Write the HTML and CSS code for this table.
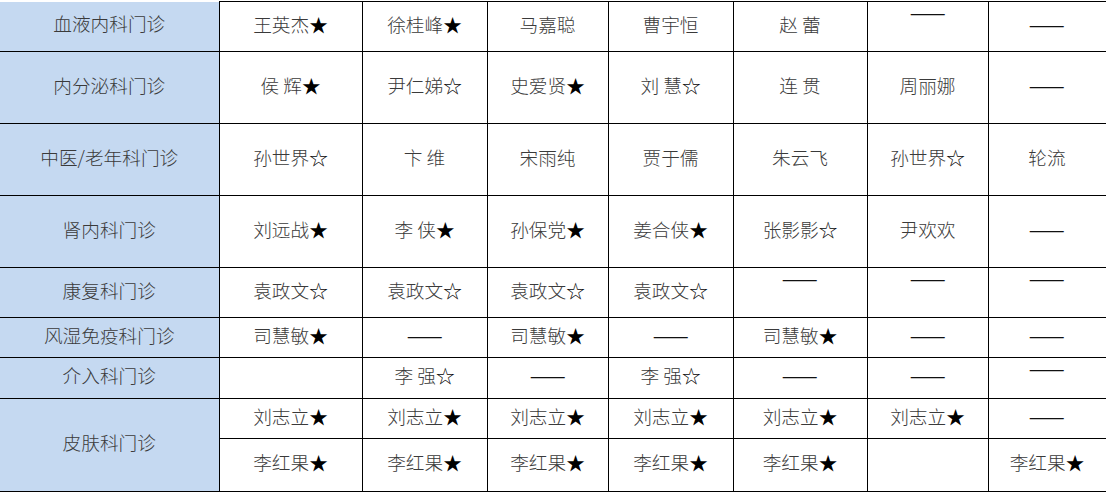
FILE: index.html
```html
<!DOCTYPE html>
<html lang="zh-CN">
<head>
<meta charset="utf-8">
<title>门诊排班</title>
<link rel="stylesheet" href="styles.css">
</head>
<body>
<table class="roster">
  <colgroup>
    <col class="c-dept">
    <col class="c1"><col class="c2"><col class="c3"><col class="c4"><col class="c5"><col class="c6"><col class="c7">
  </colgroup>
  <tbody>
    <tr class="h50">
      <td class="dept first">血液内科门诊</td>
      <td>王英杰<span class="star">★</span></td>
      <td>徐桂峰<span class="star">★</span></td>
      <td>马嘉聪</td>
      <td>曹宇恒</td>
      <td>赵 蕾</td>
      <td class="top"><span class="dash">——</span></td>
      <td><span class="dash">——</span></td>
    </tr>
    <tr class="h72">
      <td class="dept">内分泌科门诊</td>
      <td>侯 辉<span class="star">★</span></td>
      <td>尹仁娣<span class="star">☆</span></td>
      <td>史爱贤<span class="star">★</span></td>
      <td>刘 慧<span class="star">☆</span></td>
      <td>连 贯</td>
      <td>周丽娜</td>
      <td><span class="dash">——</span></td>
    </tr>
    <tr class="h72">
      <td class="dept">中医/老年科门诊</td>
      <td>孙世界<span class="star">☆</span></td>
      <td>卞 维</td>
      <td>宋雨纯</td>
      <td>贾于儒</td>
      <td>朱云飞</td>
      <td>孙世界<span class="star">☆</span></td>
      <td>轮流</td>
    </tr>
    <tr class="h72">
      <td class="dept">肾内科门诊</td>
      <td>刘远战<span class="star">★</span></td>
      <td>李 侠<span class="star">★</span></td>
      <td>孙保党<span class="star">★</span></td>
      <td>姜合侠<span class="star">★</span></td>
      <td>张影影<span class="star">☆</span></td>
      <td>尹欢欢</td>
      <td><span class="dash">——</span></td>
    </tr>
    <tr class="h50">
      <td class="dept">康复科门诊</td>
      <td>袁政文<span class="star">☆</span></td>
      <td>袁政文<span class="star">☆</span></td>
      <td>袁政文<span class="star">☆</span></td>
      <td>袁政文<span class="star">☆</span></td>
      <td class="top"><span class="dash">——</span></td>
      <td class="top"><span class="dash">——</span></td>
      <td class="top"><span class="dash">——</span></td>
    </tr>
    <tr class="h40">
      <td class="dept">风湿免疫科门诊</td>
      <td>司慧敏<span class="star">★</span></td>
      <td><span class="dash">——</span></td>
      <td>司慧敏<span class="star">★</span></td>
      <td><span class="dash">——</span></td>
      <td>司慧敏<span class="star">★</span></td>
      <td><span class="dash">——</span></td>
      <td><span class="dash">——</span></td>
    </tr>
    <tr class="h41">
      <td class="dept">介入科门诊</td>
      <td></td>
      <td>李 强<span class="star">☆</span></td>
      <td><span class="dash">——</span></td>
      <td>李 强<span class="star">☆</span></td>
      <td><span class="dash">——</span></td>
      <td><span class="dash">——</span></td>
      <td class="top"><span class="dash">——</span></td>
    </tr>
    <tr class="h40">
      <td class="dept" rowspan="2">皮肤科门诊</td>
      <td>刘志立<span class="star">★</span></td>
      <td>刘志立<span class="star">★</span></td>
      <td>刘志立<span class="star">★</span></td>
      <td>刘志立<span class="star">★</span></td>
      <td>刘志立<span class="star">★</span></td>
      <td>刘志立<span class="star">★</span></td>
      <td><span class="dash">——</span></td>
    </tr>
    <tr class="h53">
      <td>李红果<span class="star">★</span></td>
      <td>李红果<span class="star">★</span></td>
      <td>李红果<span class="star">★</span></td>
      <td>李红果<span class="star">★</span></td>
      <td>李红果<span class="star">★</span></td>
      <td></td>
      <td>李红果<span class="star">★</span></td>
    </tr>
  </tbody>
</table>
</body>
</html>
```

FILE: styles.css
```css
html, body {
  margin: 0;
  padding: 0;
  background: #ffffff;
}

body {
  padding-top: 1px;
  font-family: "Noto Sans CJK SC", "Noto Sans", sans-serif;
}

.roster {
  border-collapse: collapse;
  table-layout: fixed;
  width: 1106px;
  font-size: 18.67px;
  font-weight: 300;
  color: #3a3a3a;
}

.c-dept { width: 219px; }
.c1 { width: 143px; }
.c2 { width: 125px; }
.c3 { width: 121px; }
.c4 { width: 125px; }
.c5 { width: 134px; }
.c6 { width: 121px; }
.c7 { width: 118px; }

.roster td {
  border: 1px solid #000000;
  padding: 0 2px 6px;
  text-align: center;
  vertical-align: middle;
  line-height: 24px;
  white-space: nowrap;
}

.roster td.dept {
  background: #c5d9f1;
  border-left: none;
}

.roster td.first {
  border-top: none;
}

.roster td.top {
  vertical-align: top;
  padding-top: 0;
  line-height: 20px;
}

.star {
  color: #000000;
}

.dash {
  display: inline-block;
  color: #111111;
  font-weight: 400;
  transform: scaleX(1.15);
}

.h50 { height: 50px; }
.h72 { height: 72px; }
.h40 { height: 40px; }
.h41 { height: 41px; }
.h53 { height: 53px; }
```
